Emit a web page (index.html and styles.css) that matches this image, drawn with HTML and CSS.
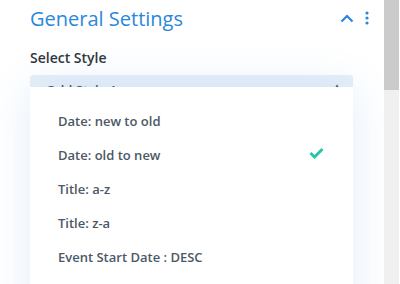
FILE: index.html
```html
<!DOCTYPE html>
<html lang="en">
<head>
  <meta charset="UTF-8" />
  <title>General Settings</title>
  <link rel="stylesheet" href="styles.css">
</head>
<body>
  <div class="frame">
    <div class="panel">
      <div class="panel-head">
        <h2>General Settings</h2>
        <div class="head-actions">
          <svg class="chevron" width="14" height="9" viewBox="0 0 14 9"><path d="M1.5 7.5 L7 2 L12.5 7.5" fill="none" stroke="#2b87da" stroke-width="2.2"/></svg>
          <svg class="dots" width="4" height="14" viewBox="0 0 4 14"><circle cx="2" cy="2" r="1.6" fill="#2b87da"/><circle cx="2" cy="7" r="1.6" fill="#2b87da"/><circle cx="2" cy="12" r="1.6" fill="#2b87da"/></svg>
        </div>
      </div>

      <div class="field">
        <label>Select Style</label>
        <div class="select">
          <span class="select-value">Odd Style 1</span>
          <span class="select-arrow">&#9650;</span>
          <ul class="dropdown">
            <li>Date: new to old</li>
            <li class="selected">Date: old to new
              <svg width="15" height="12" viewBox="0 0 15 12"><path d="M1.5 6 L5.5 10 L13.5 2" fill="none" stroke="#29c4a9" stroke-width="3"/></svg>
            </li>
            <li>Title: a-z</li>
            <li>Title: z-a</li>
            <li>Event Start Date : DESC</li>
          </ul>
        </div>
      </div>
    </div>
    <div class="scrollbar"><div class="thumb"></div></div>
  </div>
</body>
</html>
```

FILE: styles.css
```css
body {
  margin: 0;
  font-family: 'Open Sans', sans-serif;
  background: #fff;
  overflow: hidden;
}

.frame {
  display: flex;
  height: 284px;
  overflow: hidden;
}

.panel {
  flex: 1;
  padding: 0 31px 0 30px;
  overflow: hidden;
}

.panel-head {
  display: flex;
  align-items: center;
  justify-content: space-between;
  height: 36px;
}

.panel-head h2 {
  margin: 0;
  font-size: 20px;
  font-weight: 400;
  color: #2b87da;
}

.head-actions {
  display: flex;
  align-items: center;
  gap: 11px;
  margin-right: -16px;
}

.chevron {
  margin-top: 1px;
}

.field {
  margin-top: 12px;
}

.field label {
  display: block;
  font-size: 14px;
  font-weight: 600;
  color: #32373c;
  margin-bottom: 8px;
}

.select {
  position: relative;
  height: 24px;
  background: #e8f0f8;
  border-radius: 3px;
  padding: 0 16px;
  font-size: 13px;
  font-weight: 600;
  color: #4c5866;
}

.select-value {
  line-height: 30px;
}

.select-arrow {
  position: absolute;
  right: 12px;
  top: 5px;
  font-size: 8px;
}

.dropdown {
  position: absolute;
  left: 0;
  right: 0;
  top: 12px;
  height: 240px;
  margin: 0;
  padding: 17px 0 0;
  list-style: none;
  background: #fff;
  box-shadow: 0 0 40px rgba(43, 135, 218, 0.14);
}

.dropdown li {
  display: flex;
  align-items: center;
  justify-content: space-between;
  height: 34px;
  padding: 0 29px 0 28px;
  font-size: 13px;
  font-weight: 600;
  color: #4c5866;
}

.dropdown li svg {
  margin-top: -5px;
}

.scrollbar {
  width: 15px;
  background: #f0f0f0;
  border-right: 1px solid #fff;
}

.thumb {
  height: 90px;
  background: #cbcbcb;
}
```
